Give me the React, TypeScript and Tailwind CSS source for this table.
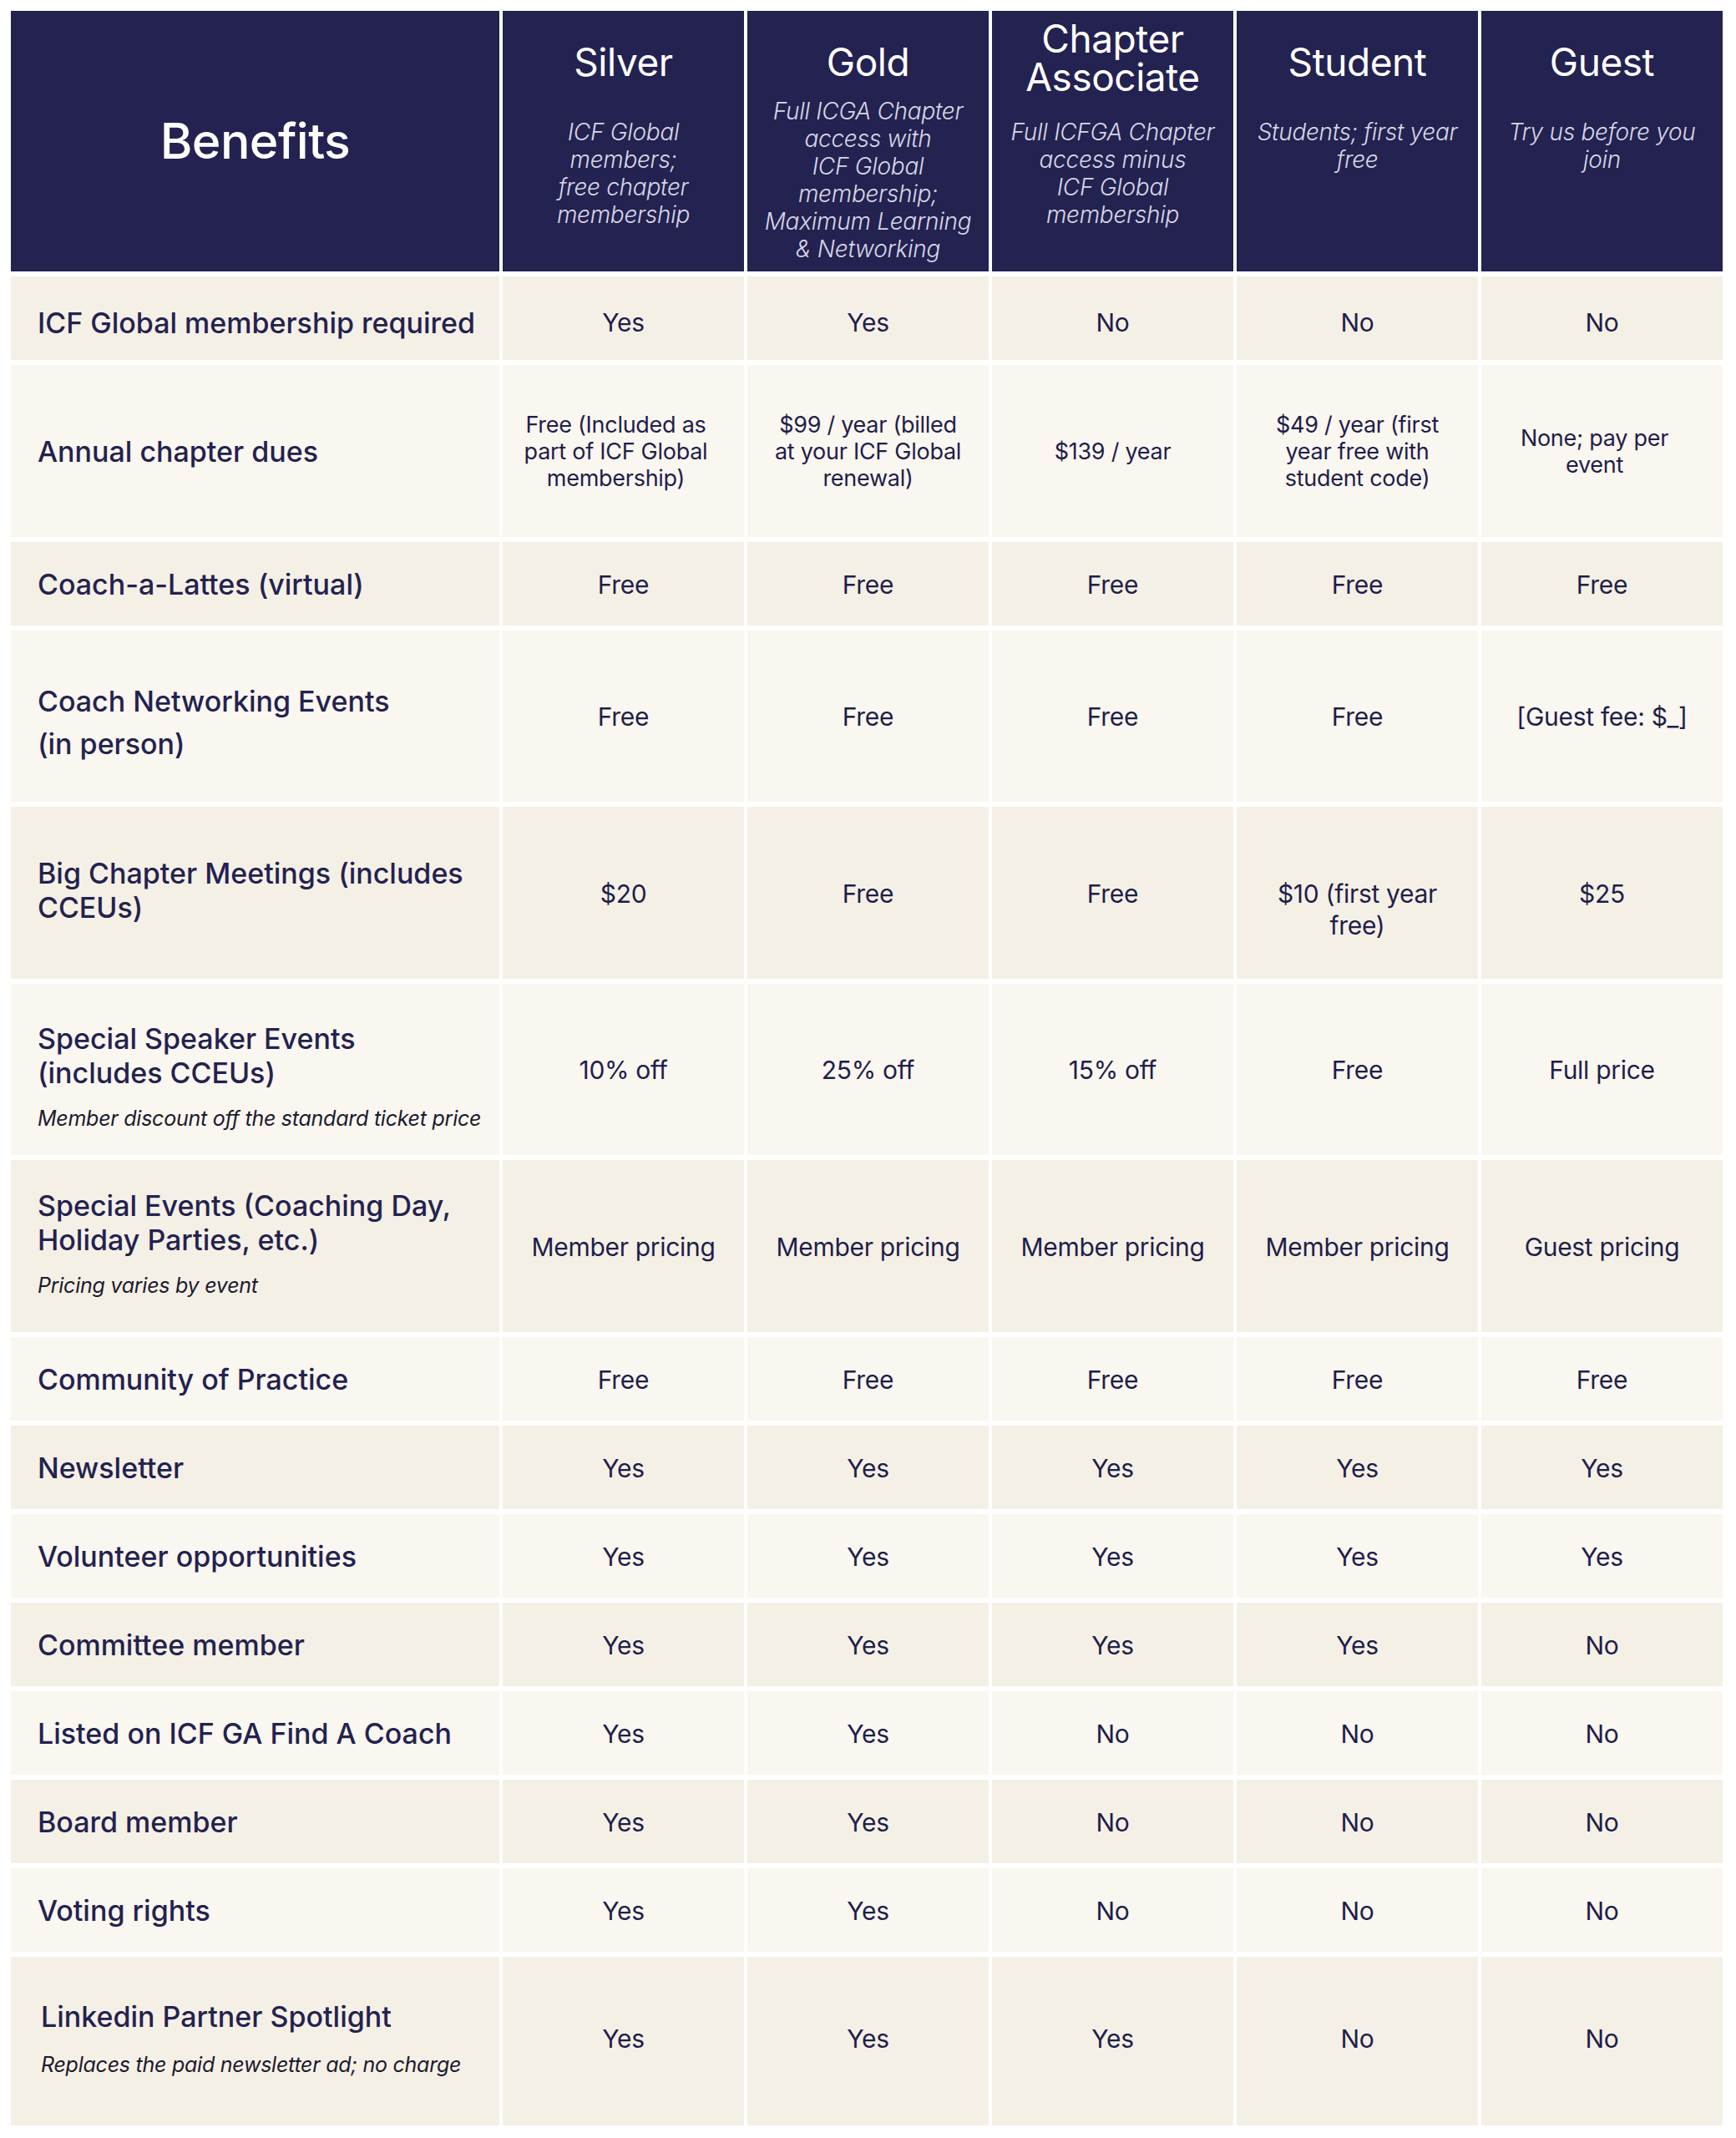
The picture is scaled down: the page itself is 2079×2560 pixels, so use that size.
import React from 'react';

type Row = {
  label: string[];
  note?: string;
  values: string[][];
  h: string;
  small?: boolean;
  spaced?: boolean;
  indent?: boolean;
  cellPad?: string;
  labelPad?: string;
  offCentre?: number[];
};

const tiers = [
  { title: ['Silver'], titlePad: 'pt-[2px]', sub: ['ICF Global', 'members;', 'free chapter', 'membership'], subClass: 'mt-[9px]' },
  {
    title: ['Gold'],
    titlePad: 'pt-[2px]',
    sub: ['Full ICGA Chapter', 'access with', 'ICF Global', 'membership;', 'Maximum Learning', '& Networking'],
    subClass: '-mt-[16px]',
  },
  {
    title: ['Chapter', 'Associate'],
    titlePad: 'pb-[8px]',
    sub: ['Full ICFGA Chapter', 'access minus', 'ICF Global', 'membership'],
    subClass: 'mt-[9px]',
  },
  { title: ['Student'], titlePad: 'pt-[2px]', sub: ['Students; first year', 'free'], subClass: 'mt-[9px]' },
  { title: ['Guest'], titlePad: 'pt-[2px]', sub: ['Try us before you', 'join'], subClass: 'mt-[9px]' },
];

const v = (...items: string[]) => items.map((s) => [s]);

const SHORT = 'h-[100px]';
const TALL = 'h-[205.5px]';

const rows: Row[] = [
  {
    label: ['ICF Global membership required'],
    h: SHORT,
    cellPad: 'pt-[10px]',
    values: v('Yes', 'Yes', 'No', 'No', 'No'),
  },
  {
    label: ['Annual chapter dues'],
    h: TALL,
    small: true,
    offCentre: [0, 4],
    values: [
      ['Free (Included as', 'part of ICF Global', 'membership)'],
      ['$99 / year (billed', 'at your ICF Global', 'renewal)'],
      ['$139 / year'],
      ['$49 / year (first', 'year free with', 'student code)'],
      ['None; pay per', 'event'],
    ],
  },
  { label: ['Coach-a-Lattes (virtual)'], h: SHORT, values: v('Free', 'Free', 'Free', 'Free', 'Free') },
  {
    label: ['Coach Networking Events', '(in person)'],
    h: TALL,
    spaced: true,
    labelPad: 'pt-[14px]',
    values: v('Free', 'Free', 'Free', 'Free', '[Guest fee: $_]'),
  },
  {
    label: ['Big Chapter Meetings (includes', 'CCEUs)'],
    h: TALL,
    labelPad: 'pb-[7px]',
    values: [['$20'], ['Free'], ['Free'], ['$10 (first year', 'free)'], ['$25']],
  },
  {
    label: ['Special Speaker Events', '(includes CCEUs)'],
    note: 'Member discount off the standard ticket price',
    h: TALL,
    labelPad: 'pt-[14px]',
    values: v('10% off', '25% off', '15% off', 'Free', 'Full price'),
  },
  {
    label: ['Special Events (Coaching Day,', 'Holiday Parties, etc.)'],
    note: 'Pricing varies by event',
    h: TALL,
    labelPad: 'pb-[9px]',
    values: v('Member pricing', 'Member pricing', 'Member pricing', 'Member pricing', 'Guest pricing'),
  },
  { label: ['Community of Practice'], h: SHORT, values: v('Free', 'Free', 'Free', 'Free', 'Free') },
  { label: ['Newsletter'], h: SHORT, values: v('Yes', 'Yes', 'Yes', 'Yes', 'Yes') },
  { label: ['Volunteer opportunities'], h: SHORT, values: v('Yes', 'Yes', 'Yes', 'Yes', 'Yes') },
  { label: ['Committee member'], h: SHORT, values: v('Yes', 'Yes', 'Yes', 'Yes', 'No') },
  { label: ['Listed on ICF GA Find A Coach'], h: SHORT, values: v('Yes', 'Yes', 'No', 'No', 'No') },
  { label: ['Board member'], h: SHORT, values: v('Yes', 'Yes', 'No', 'No', 'No') },
  { label: ['Voting rights'], h: SHORT, values: v('Yes', 'Yes', 'No', 'No', 'No') },
  {
    label: ['Linkedin Partner Spotlight'],
    note: 'Replaces the paid newsletter ad; no charge',
    h: 'h-[202px]',
    indent: true,
    cellPad: 'pb-[6px]',
    values: v('Yes', 'Yes', 'Yes', 'No', 'No'),
  },
];

const rowBg = ['bg-[#f5f0e6]', 'bg-[#faf6f0]'];

function ValueCell({
  lines,
  small,
  bg,
  pad,
  left,
}: {
  lines: string[];
  small?: boolean;
  bg: string;
  pad: string;
  left?: boolean;
}) {
  // the two-line "$10 (first year free)" cell keeps its first line on the row's centre
  const pushDown = !small && lines.length > 1 ? 'pt-[38px]' : '';
  return (
    <div
      className={`${bg} ${pad} ${left ? 'pr-[18px]' : ''} flex items-center justify-center text-center text-[#1f1e4b]`}
    >
      <div className={pushDown}>
        {lines.map((l, i) => (
          <div
            key={i}
            className={small ? 'text-[27px] leading-[32px] tracking-[-0.01em]' : 'text-[30px] leading-[38px] tracking-[-0.01em]'}
          >
            {l}
          </div>
        ))}
      </div>
    </div>
  );
}

export default function App() {
  return (
    <div className="bg-white px-[13px] pt-[13px] pb-[15px] font-[Inter,sans-serif]">
      <div className="flex flex-col gap-[6px]">
        {/* Header */}
        <div className="grid grid-cols-[585px_repeat(5,289px)] gap-x-[4px] h-[312px]">
          <div className="bg-[#232251] flex items-center justify-center">
            <span className="text-white text-[59px] font-medium tracking-[-0.01em]">Benefits</span>
          </div>
          {tiers.map((t, i) => (
            <div key={i} className="bg-[#232251] flex flex-col items-center text-center">
              <div
                className={`h-[120px] flex items-center justify-center ${t.titlePad} text-white text-[46px] leading-[46px] tracking-[-0.01em]`}
              >
                <div>
                  {t.title.map((l, li) => (
                    <React.Fragment key={l}>
                      {li > 0 && <br />}
                      {l}
                    </React.Fragment>
                  ))}
                </div>
              </div>
              <div className={`${t.subClass} text-[#d7d7e6] italic font-light text-[28px] leading-[33px] tracking-[-0.01em]`}>
                {t.sub.map((l) => (
                  <div key={l}>{l}</div>
                ))}
              </div>
            </div>
          ))}
        </div>

        {/* Body rows */}
        {rows.map((r, ri) => {
          const bg = rowBg[ri % 2];
          const pad = r.cellPad ?? 'pt-[2px]';
          return (
            <div key={ri} className={`grid grid-cols-[585px_repeat(5,289px)] gap-x-[4px] ${r.h}`}>
              <div className={`${bg} ${pad} flex flex-col justify-center pl-[32px] pr-[12px] text-[#23224f]`}>
                <div className={`${r.indent ? 'pl-[4px]' : ''} ${r.labelPad ?? ''}`}>
                  {r.label.map((l, li) => (
                    <div
                      key={li}
                      className={`text-[34px] leading-[41px] font-medium ${r.spaced && li > 0 ? 'mt-[10px]' : ''}`}
                    >
                      {l}
                    </div>
                  ))}
                  {r.note && (
                    <div
                      className={`${r.indent ? 'mt-[22px]' : 'mt-[19px]'} text-[25px] leading-[30px] italic text-[#1c1b2e] tracking-[-0.01em]`}
                    >
                      {r.note}
                    </div>
                  )}
                </div>
              </div>
              {r.values.map((val, vi) => (
                <ValueCell
                  key={vi}
                  lines={val}
                  small={r.small}
                  bg={bg}
                  pad={pad}
                  left={r.offCentre?.includes(vi)}
                />
              ))}
            </div>
          );
        })}
      </div>
    </div>
  );
}
